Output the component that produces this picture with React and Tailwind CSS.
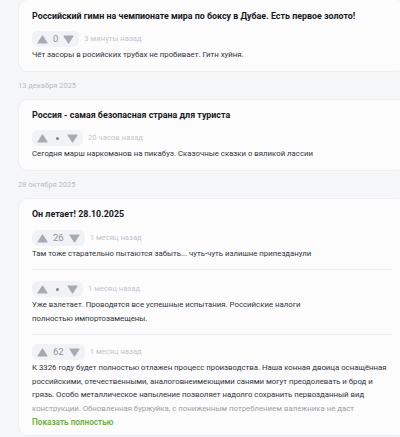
import React from 'react'

const Up = () => (
  <svg width="11" height="9" viewBox="0 0 11 9" className="shrink-0">
    <path d="M5.5 1 L10 8 H1 Z" fill="#a6abb3" stroke="#a6abb3" strokeWidth="1.2" strokeLinejoin="round" />
  </svg>
)

const Down = () => (
  <svg width="11" height="9" viewBox="0 0 11 9" className="shrink-0">
    <path d="M1 1 H10 L5.5 8 Z" fill="#a6abb3" stroke="#a6abb3" strokeWidth="1.2" strokeLinejoin="round" />
  </svg>
)

function Vote({ score, time }) {
  return (
    <div className="flex items-center">
      <div className="flex items-center h-[16px] px-[5px] gap-[5px] rounded-[6px] bg-[#f0f2f5]">
        <Up />
        {score === null ? (
          <span className="mx-[3px] w-[3px] h-[3px] rounded-full bg-[#7d838c]" />
        ) : (
          <span className="text-[9.5px] leading-none text-[#8c929b]">{score}</span>
        )}
        <Down />
      </div>
      <span className="ml-[5px] text-[7.7px] text-[#c2c6cc]">{time}</span>
    </div>
  )
}

function Comment({ score, time, lines, faded, last, pt = 'pt-[10px]', leading = 'leading-[14px]' }) {
  return (
    <div className={pt + (last ? '' : ' pb-[8px] border-b border-[#eceef1]')}>
      <Vote score={score} time={time} />
      <div className={'mt-[1px] text-[7.8px] text-[#30343a] ' + leading}>
        {lines.map((l, i) => (
          <div
            key={i}
            className={'whitespace-nowrap ' + (faded && i === lines.length - 1 ? 'text-[#9a9fa6]' : '')}
          >
            {l}
          </div>
        ))}
      </div>
    </div>
  )
}

function Card({ title, children, className = '' }) {
  return (
    <div className={'w-[388px] shrink-0 rounded-[10px] border border-[#eceef1] bg-[#fcfcfd] px-[13px] ' + className}>
      <div className="text-[8.9px] leading-[14px] font-bold text-[#16181b] whitespace-nowrap">{title}</div>
      {children}
    </div>
  )
}

const DateLabel = ({ children }) => (
  <div className="h-[27px] flex items-center text-[7.5px] text-[#b7bbc1]">{children}</div>
)

export default function App() {
  return (
    <div className="w-[400px] h-[437px] overflow-hidden bg-[#f5f6f8] font-['Roboto',sans-serif]">
      <div className="pl-[18px] -mt-px flex flex-col">
        <Card title="Российский гимн на чемпионате мира по боксу в Дубае. Есть первое золото!" className="pt-[9px] pb-[9px]">
          <div className="mt-[8px]">
            <Vote score="0" time="3 минуты назад" />
          </div>
          <div className="mt-[1px] text-[7.8px] leading-[14px] text-[#30343a]">
            Чёт засоры в росийских трубах не пробивает. Гитн хуйня.
          </div>
        </Card>

        <DateLabel>13 декабря 2025</DateLabel>

        <Card title="Россия - самая безопасная страна для туриста" className="pt-[8px] pb-[9px]">
          <div className="mt-[8px]">
            <Vote score={null} time="20 часов назад" />
          </div>
          <div className="mt-[1px] text-[7.8px] leading-[14px] text-[#30343a]">
            Сегодня марш наркоманов на пикабуэ. Сказочные сказки о вяликой лассии
          </div>
        </Card>

        <DateLabel>28 октября 2025</DateLabel>

        <Card title="Он летает! 28.10.2025" className="pt-[8px] pb-[6px]">
          <div className="-mt-[1px]">
            <Comment
              score="26"
              time="1 месяц назад"
              lines={['Там тоже старательно пытаются забыть... чуть-чуть излишне припезданули']}
            />
            <Comment
              score={null}
              time="1 месяц назад"
              pt="pt-[11px]"
              lines={['Уже взлетает. Проводятся все успешные испытания. Российские налоги', 'полностью импортозамещены.']}
            />
            <Comment
              score="62"
              time="1 месяц назад"
              pt="pt-[9px]"
              leading="leading-[13.5px]"
              faded
              last
              lines={[
                'К 3326 году будет полностью отлажен процесс производства. Наша конная двоица оснащённая',
                'российскими, отечественными, аналоговнеимеющими санями могут преодолевать и брод и',
                'грязь. Особо металлическое напыление позволяет надолго сохранить первозданный вид',
                'конструкции. Обновленная буржуйка, с пониженным потреблением валежника не даст',
              ]}
            />
            <div className="text-[8.2px] leading-[14px] font-semibold text-[#6faa3f]">Показать полностью</div>
          </div>
        </Card>
      </div>
    </div>
  )
}
